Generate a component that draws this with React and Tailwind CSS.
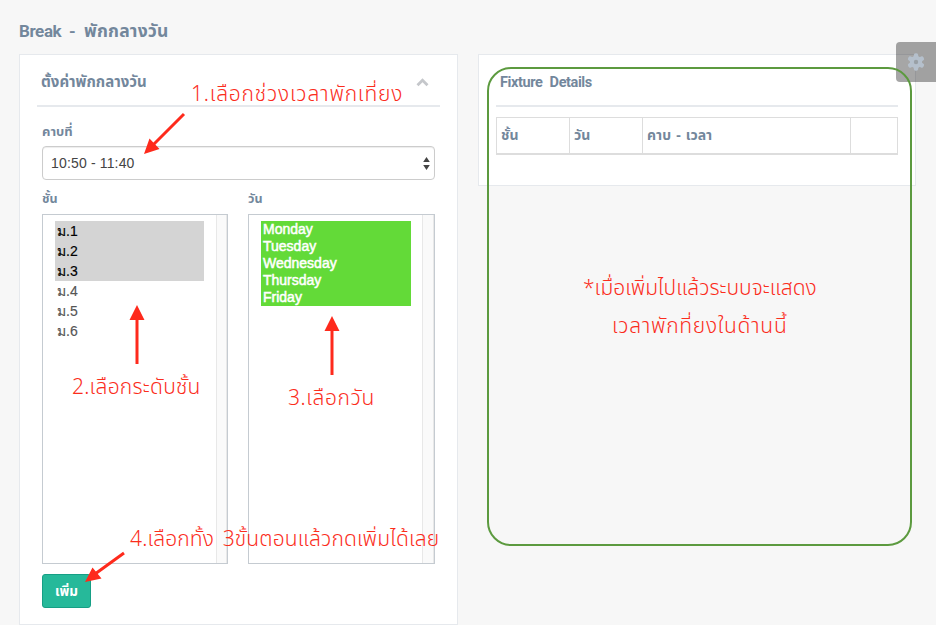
function Header({ title, className, children }) {
  return (
    <div className="flex h-[52px] items-start justify-between border-b-2 border-[#e6e9ed] pl-[4px] pt-[17px]">
      <h2 className={`font-bold leading-[22px] whitespace-nowrap ${className}`}>{title}</h2>
      {children}
    </div>
  );
}

function ListBox({ children, track }) {
  return (
    <div className="flex h-[350px] justify-between border border-[#c5cbd1] bg-white pt-[6px] pl-[12px]">
      {children}
      <div className={`-mt-[6px] border-x border-[#e8e8e8] bg-[#fafafa] ${track}`} />
    </div>
  );
}

const note = "absolute whitespace-nowrap font-light text-[#fb2d1c] text-[21px] leading-[30px]";

export default function App() {
  const grades = ["ม.1", "ม.2", "ม.3", "ม.4", "ม.5", "ม.6"];
  const days = ["Monday", "Tuesday", "Wednesday", "Thursday", "Friday"];
  return (
    <div className="relative h-[625px] w-[936px] overflow-hidden bg-[#f7f7f7] font-['Noto_Sans_Thai','Open_Sans',sans-serif] text-[#73879c]">
      <h1 className="flex h-[54px] pl-[19px] pt-[17px] text-[17.5px] font-bold leading-[28px] whitespace-pre">
        <span className="w-[65px] font-['Roboto',sans-serif] text-[17px] tracking-[-0.4px] [word-spacing:4px]">Break -</span>
        <span className="pt-px tracking-[0.2px]">พักกลางวัน</span>
      </h1>
      <div className="flex items-start gap-[20px] pl-[19px]">
        <section className="h-[571px] w-[439px] border border-[#e6e9ed] bg-white px-[17px]">
          <Header title="ตั้งค่าพักกลางวัน" className="text-[15px]">
            <svg className="mr-[11px] mt-[6px]" width="13" height="9" viewBox="0 0 13 9">
              <path d="M1.500 7.200 6.500 2.200 11.500 7.200" fill="none" stroke="#c5c7cb" strokeWidth="2.8" />
            </svg>
          </Header>
          <div className="px-[5px]">
            <div className="h-[39px] pt-[15px] text-[13px] font-bold leading-[20px]">คาบที่</div>
            <div className="flex h-[34px] items-center justify-between rounded-[4px] border border-[#ccc] px-[8px] pr-[4px] font-['Liberation_Sans',sans-serif] text-[14px] tracking-[0.16px] text-[#444] shadow-[inset_0_1px_1px_rgba(0,0,0,0.075)]">
              <span>10:50 - 11:40</span>
              <svg width="7" height="13" viewBox="0 0 7 13" fill="#444">
                <path d="M3.500 0 6.800 5H.2zM3.500 13 .2 8h6.600z" />
              </svg>
            </div>
            <div className="flex gap-[20px]">
              <div className="w-[186px]">
                <div className="h-[34px] pt-[10px] text-[12.5px] font-bold leading-[20px]">ชั้น</div>
                <ListBox track="w-[11px]">
                  <ul className="w-[149px] font-['Liberation_Sans',sans-serif] text-[14px] leading-[20px] text-[#555]">
                    {grades.map((g, i) => (
                      <li key={g} className={i < 3 ? "h-[20px] bg-[#d4d4d4] pl-[2px] text-black [-webkit-text-stroke:0.15px_black]" : "h-[20px] pl-[2px] [-webkit-text-stroke:0.15px_#555]"}>{g}</li>
                    ))}
                  </ul>
                </ListBox>
              </div>
              <div className="w-[187px]">
                <div className="h-[34px] pt-[10px] text-[12.5px] font-bold leading-[20px]">วัน</div>
                <ListBox track="w-[12px]">
                  <ul className="w-[150px] font-['Liberation_Sans',sans-serif] text-[14px] leading-[17px] text-white">
                    {days.map((d) => (
                      <li key={d} className="h-[17px] bg-[#63da38] pl-[2px] [-webkit-text-stroke:0.5px_white]">{d}</li>
                    ))}
                  </ul>
                </ListBox>
              </div>
            </div>
            <button className="mt-[10px] flex h-[34px] w-[49px] items-center justify-center rounded-[3px] border border-[#169f85] bg-[#26b99a] pt-[2px] text-[13.5px] font-bold text-white">เพิ่ม</button>
          </div>
        </section>
        <section className="h-[132px] w-[438px] border border-[#e6e9ed] bg-white px-[17px]">
          <Header title="Fixture Details" className="font-['Roboto',sans-serif] text-[14.5px] tracking-[-0.4px] [word-spacing:4px]" />
          <div className="mt-[10px] grid h-[38px] w-[402px] grid-cols-[73px_73px_208px_1fr] border border-b-2 border-[#ddd] text-[14px] font-bold leading-[36px]">
            <div className="h-[35px] border-r border-[#ddd] pl-[4px]">ชั้น</div>
            <div className="h-[35px] border-r border-[#ddd] pl-[4px]">วัน</div>
            <div className="h-[35px] border-r border-[#ddd] pl-[4px] [word-spacing:1.5px]">คาบ - เวลา</div>
            <div />
          </div>
        </section>
      </div>

      <div className="absolute left-[896px] top-[42px] flex h-[40px] w-[40px] items-center justify-center rounded-l-[4px] bg-black/35">
        <svg width="18" height="18" viewBox="0 0 18 18">
          <g fill="#b5c0cc">
            <circle cx="9" cy="9" r="6.2" />
            <rect x="6.8" y="0.2" width="4.4" height="17.6" rx="1.8" />
            <rect x="6.8" y="0.2" width="4.4" height="17.6" rx="1.8" transform="rotate(60 9 9)" />
            <rect x="6.8" y="0.2" width="4.4" height="17.6" rx="1.8" transform="rotate(120 9 9)" />
          </g>
          <circle cx="9" cy="9" r="2.2" fill="#99a0a6" />
        </svg>
      </div>
      <div className="absolute left-[487px] top-[67px] h-[479px] w-[425px] rounded-[24px] border-2 border-[#5c9a3f]" />

      <svg className="absolute left-0 top-0" width="936" height="625" viewBox="0 0 936 625" fill="#fe2a1c" stroke="#fe2a1c">
        <path d="M184 114 153 145M137 364V318M332 375V329M124 553 95 574" strokeWidth="3" fill="none" />
        <path stroke="none" d="M144 154 149.500 138.500 159.500 149zM137 305 144.500 320H129.500zM332 316 339.500 331H324.500zM85 582 92.500 567.500 101.500 578.500z" />
      </svg>
      <div className={`${note} left-[191px] top-[80px] tracking-[0.8px]`}>1.เลือกช่วงเวลาพักเที่ยง</div>
      <div className={`${note} left-[72px] top-[373px] tracking-[0.25px]`}>2.เลือกระดับชั้น</div>
      <div className={`${note} left-[288px] top-[384px] tracking-[0.6px]`}>3.เลือกวัน</div>
      <div className={`${note} left-[130px] top-[525px] tracking-[0.15px] [word-spacing:3px]`}>4.เลือกทั้ง 3ขั้นตอนแล้วกดเพิ่มได้เลย</div>
      <div className={`${note} left-[583px] top-[274px]`}>*เมื่อเพิ่มไปแล้วระบบจะแสดง</div>
      <div className={`${note} left-[612px] top-[312px] tracking-[0.7px]`}>เวลาพักที่ยงในด้านนี้</div>
    </div>
  );
}
